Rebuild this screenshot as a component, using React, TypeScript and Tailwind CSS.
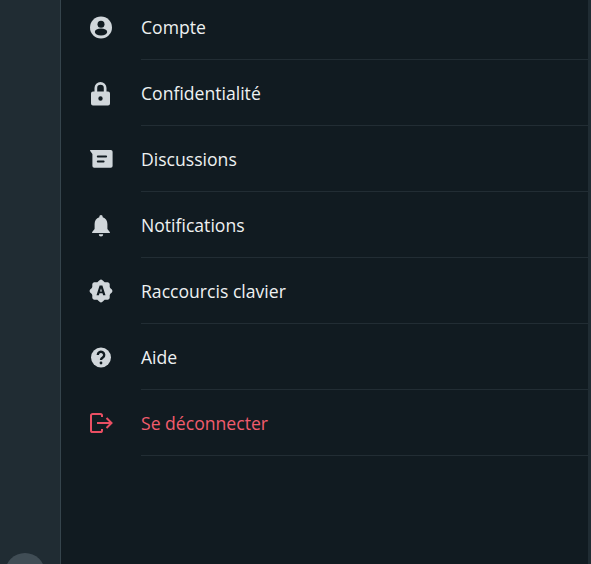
const items = [
  { label: "Compte", icon: <CompteIcon /> },
  { label: "Confidentialité", icon: <LockIcon /> },
  { label: "Discussions", icon: <ChatIcon /> },
  { label: "Notifications", icon: <BellIcon /> },
  { label: "Raccourcis clavier", icon: <KeyboardIcon /> },
  { label: "Aide", icon: <HelpIcon /> },
];

function CompteIcon() {
  return (
    <svg width="24" height="24" viewBox="0 0 24 24">
      <circle cx="12" cy="12.500" r="11" fill="currentColor" />
      <circle cx="12" cy="9.200" r="3.500" fill="#111b21" />
      <ellipse cx="12" cy="17" rx="6.200" ry="3.400" fill="#111b21" />
    </svg>
  );
}

function LockIcon() {
  return (
    <svg width="24" height="26" viewBox="0 -1 24 26">
      <path
        fill="currentColor"
        fillRule="evenodd"
        d="M4 10.500h1.500V7a6 6 0 0 1 12 0v3.500H19a2 2 0 0 1 2 2v10a2 2 0 0 1-2 2H4a2 2 0 0 1-2-2v-10a2 2 0 0 1 2-2ZM8.200 10.500h6.600V7a3.300 3.300 0 0 0-6.600 0v3.500ZM11.500 19.700a2.200 2.200 0 1 0 0-4.400 2.200 2.200 0 0 0 0 4.400Z"
      />
    </svg>
  );
}

function ChatIcon() {
  return (
    <svg width="24" height="24" viewBox="0 0 24 24">
      <path
        fill="currentColor"
        fillRule="evenodd"
        d="M1.800 3h20a1.800 1.800 0 0 1 1.800 1.800v14.100a1.800 1.800 0 0 1-1.800 1.800H5.200a1.800 1.800 0 0 1-1.800-1.800V7L1.200 4.100C.8 3.600 1.100 3 1.800 3ZM8.800 8.500a1 1 0 0 0 0 2h8.300a1 1 0 0 0 0-2H8.800ZM8.800 13.600a1 1 0 0 0 0 2h5.800a1 1 0 0 0 0-2H8.800Z"
      />
    </svg>
  );
}

function BellIcon() {
  return (
    <svg width="24" height="24" viewBox="0 0 24 24">
      <path
        fill="currentColor"
        d="M12 2a1.700 1.700 0 0 1 1.700 1.700v.5c3.100.8 4.700 3.500 4.700 6.700v5.200l2.400 2.900c.4.500.1 1.100-.5 1.100H3.700c-.6 0-.9-.6-.5-1.100l2.400-2.900v-5.200c0-3.200 1.600-5.900 4.700-6.700v-.5A1.700 1.700 0 0 1 12 2ZM9.800 21.300h4.400a2.200 2.200 0 0 1-4.400 0Z"
      />
    </svg>
  );
}

// scalloped badge, 8 bumps
const badgePoints = Array.from({ length: 96 }, (_, i) => {
  const a = (i / 96) * Math.PI * 2 - Math.PI / 2;
  const r = 10.500 + 0.900 * Math.cos(8 * a + 4 * Math.PI);
  return `${(12 + r * Math.cos(a)).toFixed(2)},${(12 + r * Math.sin(a)).toFixed(2)}`;
}).join(" ");

function KeyboardIcon() {
  return (
    <svg width="24" height="24" viewBox="0 0 24 24">
      <polygon fill="currentColor" points={badgePoints} />
      <path
        fill="#111b21"
        fillRule="evenodd"
        d="M10.600 6.500h2.800l3.100 9.700h-2.400l-.6-2h-3l-.6 2H7.500l3.100-9.700Zm1.400 2.700-.9 3.200h1.800l-.9-3.200Z"
      />
    </svg>
  );
}

function HelpIcon() {
  return (
    <svg width="24" height="24" viewBox="0 0 24 24">
      <circle cx="12" cy="12.500" r="10" fill="currentColor" />
      <path
        fill="none"
        stroke="#111b21"
        strokeWidth="2.400"
        d="M8.800 10a3.200 3.200 0 1 1 5 2.600c-1.200.8-1.800 1.400-1.800 2.400"
      />
      <circle cx="12" cy="18" r="1.400" fill="#111b21" />
    </svg>
  );
}

function LogoutIcon() {
  return (
    <svg width="24" height="24" viewBox="0 0 24 24" fill="none" stroke="currentColor" strokeWidth="2">
      <path d="M13 6V4.600A1.600 1.600 0 0 0 11.400 3H3.600A1.600 1.600 0 0 0 2 4.600v14.800A1.600 1.600 0 0 0 3.600 21h7.800a1.600 1.600 0 0 0 1.600-1.600V18" />
      <path d="M8 12h14.500M17.500 7l5 5-5 5" />
    </svg>
  );
}

export default function App() {
  return (
    <div
      className="flex h-[564px] w-[591px] overflow-hidden bg-[#202c33]"
      style={{ fontFamily: '"Open Sans", "Noto Sans", sans-serif' }}
    >
      {/* left rail */}
      <div className="flex w-[61px] flex-col items-center justify-end border-r border-[#35444c]">
        <div className="-mb-[29px] ml-[-10px] h-[40px] w-[40px] shrink-0 rounded-full bg-[#404d55]" />
      </div>

      <div className="w-[527px] bg-[#111b21]">
        <div className="-mt-[6px]">
          {items.map((item) => (
            <div key={item.label} className="flex h-[66px] items-center gap-[28px] pl-[28px]">
              <div className="text-[#d1d7db]">{item.icon}</div>
              <div className="flex h-full flex-1 items-center border-b border-[#222d34] pt-[2px] text-[17.6px] text-[#eef1f2]">
                {item.label}
              </div>
            </div>
          ))}
          <div className="flex h-[66px] items-center gap-[28px] pl-[28px]">
            <div className="text-[#ea4f63]">
              <LogoutIcon />
            </div>
            <div className="flex h-full flex-1 items-center border-b border-[#222d34] pt-[2px] text-[17.6px] text-[#f15c6d]">
              Se déconnecter
            </div>
          </div>
        </div>
      </div>

      <div className="flex-1" />
    </div>
  );
}
